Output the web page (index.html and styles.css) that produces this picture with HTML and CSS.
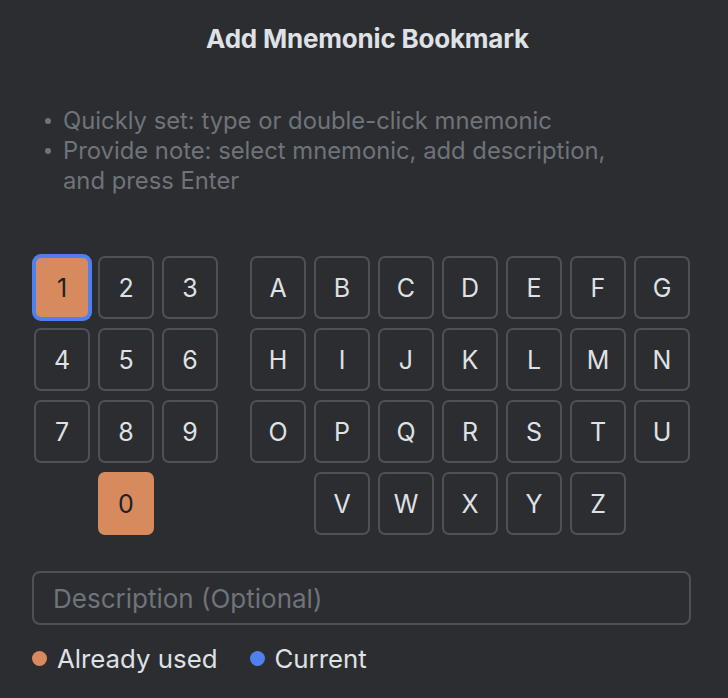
FILE: index.html
```html
<!DOCTYPE html>
<html>
<head>
<meta charset="utf-8">
<link rel="stylesheet" href="styles.css">
</head>
<body>
<div class="dialog">
  <h1 class="title">Add Mnemonic Bookmark</h1>
  <ul class="hints">
    <li>Quickly set: type or double-click mnemonic</li>
    <li>Provide note: select mnemonic, add description,<br>and press Enter</li>
  </ul>
  <div class="keys">
    <div class="grid nums">
      <div class="key used current">1</div>
      <div class="key">2</div>
      <div class="key">3</div>
      <div class="key">4</div>
      <div class="key">5</div>
      <div class="key">6</div>
      <div class="key">7</div>
      <div class="key">8</div>
      <div class="key">9</div>
      <div class="key used col2">0</div>
    </div>
    <div class="grid letters">
      <div class="key">A</div><div class="key">B</div><div class="key">C</div><div class="key">D</div><div class="key">E</div><div class="key">F</div><div class="key">G</div>
      <div class="key">H</div><div class="key">I</div><div class="key">J</div><div class="key">K</div><div class="key">L</div><div class="key">M</div><div class="key">N</div>
      <div class="key">O</div><div class="key">P</div><div class="key">Q</div><div class="key">R</div><div class="key">S</div><div class="key">T</div><div class="key">U</div>
      <div class="key col2">V</div><div class="key">W</div><div class="key">X</div><div class="key">Y</div><div class="key">Z</div>
    </div>
  </div>
  <div class="desc">Description (Optional)</div>
  <div class="legend">
    <span class="item"><span class="dot dot-used"></span>Already used</span>
    <span class="item"><span class="dot dot-current"></span>Current</span>
  </div>
</div>
</body>
</html>
```

FILE: styles.css
```css
html, body {
  margin: 0;
  padding: 0;
  background: #2b2d30;
}
body {
  width: 728px;
  height: 698px;
  overflow: hidden;
  font-family: Inter, "Noto Sans", sans-serif;
  color: #dfe1e5;
}
.dialog {
  padding: 23px 0 0 0;
}
.title {
  margin: 0;
  padding-left: 7px;
  text-align: center;
  font-size: 26px;
  font-weight: 700;
  line-height: 32px;
  color: #dfe1e5;
  letter-spacing: -0.2px;
}
.hints {
  list-style: none;
  margin: 51px 0 0 0;
  padding: 0 0 0 63px;
  font-size: 23.8px;
  line-height: 30px;
  color: #6f737a;
}
.hints li {
  position: relative;
}
.hints li::before {
  content: "";
  position: absolute;
  left: -18px;
  top: 12px;
  width: 6px;
  height: 6px;
  border-radius: 50%;
  background: #6f737a;
}
.keys {
  display: flex;
  gap: 32px;
  margin: 60px 0 0 34px;
}
.grid {
  display: grid;
  grid-auto-rows: 63px;
  column-gap: 8px;
  row-gap: 9px;
}
.nums {
  grid-template-columns: repeat(3, 56px);
}
.letters {
  grid-template-columns: repeat(7, 56px);
}
.key {
  box-sizing: border-box;
  border: 2px solid #4e5157;
  border-radius: 7px;
  display: flex;
  align-items: center;
  justify-content: center;
  font-size: 25px;
  color: #dfe1e5;
}
.col2 {
  grid-column-start: 2;
}
.key.used {
  background: #d68a5e;
  border-color: #d68a5e;
  color: #1e1f22;
}
.key.current {
  border-color: #4f80ef;
  box-shadow: 0 0 0 2px #4f80ef;
}
.desc {
  box-sizing: border-box;
  margin: 36px 37px 0 32px;
  height: 54px;
  border: 2px solid #4e5157;
  border-radius: 8px;
  padding-left: 19px;
  display: flex;
  align-items: center;
  font-size: 26px;
  color: #6f737a;
}
.legend {
  display: flex;
  align-items: center;
  margin: 18px 0 0 32px;
  height: 30px;
  font-size: 25.8px;
  color: #dfe1e5;
}
.item {
  display: flex;
  align-items: center;
  margin-right: 32px;
}
.dot {
  width: 15px;
  height: 15px;
  border-radius: 50%;
  margin-right: 10px;
}
.dot-used { background: #d68a5e; }
.dot-current { background: #4f80ef; }
```
